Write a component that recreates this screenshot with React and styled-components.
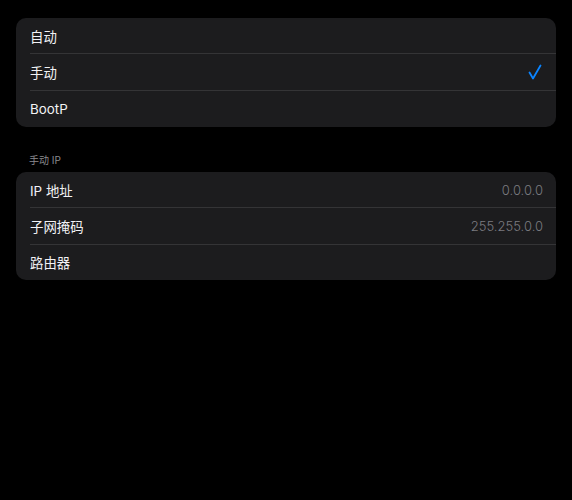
import React from "react";
import styled, { createGlobalStyle } from "styled-components";

const Global = createGlobalStyle`
  html, body { margin: 0; padding: 0; background: #000; }
  body {
    font-family: "Inter", "Noto Sans CJK SC", sans-serif;
    -webkit-font-smoothing: antialiased;
  }
`;

const Page = styled.div`
  min-height: 500px;
  background: #000;
  box-sizing: border-box;
  padding: 18px 16px 0 16px;
  display: flex;
  flex-direction: column;
`;

const Card = styled.div`
  background: #1c1c1e;
  border-radius: 10px;
  display: flex;
  flex-direction: column;
  overflow: hidden;
`;

const Row = styled.div`
  height: ${(p) => p.$h}px;
  box-sizing: border-box;
  display: flex;
  align-items: center;
  justify-content: space-between;
  padding: 0 13px 0 14px;
  position: relative;
  &:not(:last-child)::after {
    content: "";
    position: absolute;
    left: 14px;
    right: 0;
    bottom: 0;
    height: 1px;
    background: #343436;
  }
`;

const Label = styled.span`
  color: #f2f2f5;
  font-size: 13.4px;
  font-weight: 400;
`;

const Value = styled.span`
  color: #7b7b80;
  font-size: 13px;
  font-weight: 300;
`;

const SectionHeader = styled.div`
  color: #8a8a8f;
  font-size: 10px;
  line-height: 12px;
  padding: 27px 0 6px 13px;
`;

const Check = () => (
  <svg width="14" height="16" viewBox="0 0 14 16" style={{ marginRight: 1 }}>
    <polyline
      points="1.5,8.5 5,14.5 12.5,1.5"
      fill="none"
      stroke="#0a84ff"
      strokeWidth="1.8"
      strokeLinecap="round"
      strokeLinejoin="round"
    />
  </svg>
);

export default function App() {
  return (
    <>
      <Global />
      <Page>
        <Card>
          <Row $h={35.5}><Label>自动</Label></Row>
          <Row $h={37}><Label>手动</Label><Check /></Row>
          <Row $h={36.5}><Label>BootP</Label></Row>
        </Card>
        <SectionHeader>手动 IP</SectionHeader>
        <Card>
          <Row $h={35.5}><Label>IP 地址</Label><Value>0.0.0.0</Value></Row>
          <Row $h={37}><Label>子网掩码</Label><Value>255.255.0.0</Value></Row>
          <Row $h={35}><Label>路由器</Label></Row>
        </Card>
      </Page>
    </>
  );
}
